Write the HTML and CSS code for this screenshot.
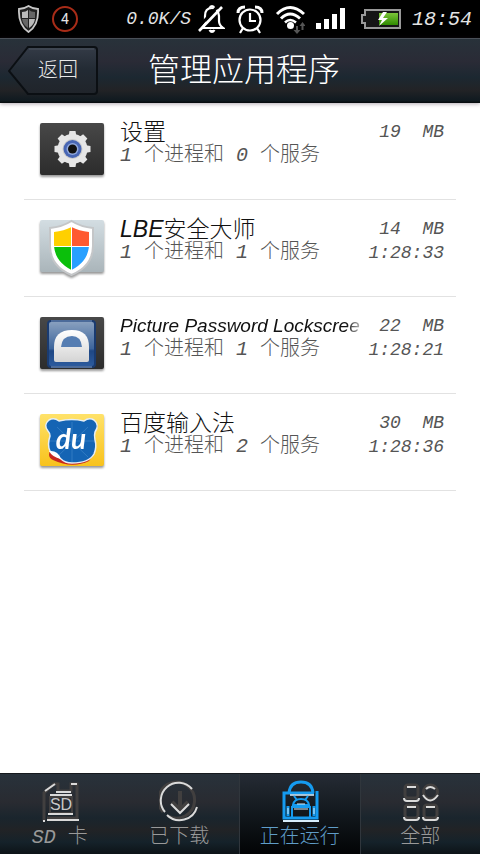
FILE: index.html
```html
<!DOCTYPE html>
<html lang="zh-CN">
<head>
    <meta charset="UTF-8">
    <meta name="viewport" content="width=device-width, initial-scale=1.0">
    <title>管理应用程序</title>
    <link rel="stylesheet" href="styles.css">
</head>
<body>

    <!-- status bar -->
    <div class="status-bar">
        <svg width="21" height="28" viewBox="0 0 21 28">
            <path d="M10.500 1Q15 4 20 4Q21 20 10.500 27Q0 20 1 4Q6 4 10.500 1Z" fill="#222" stroke="#c8c8c8" stroke-width="1.800"/>
            <path d="M10 5V13H4V7Q8 7 10 5Z" fill="#bbb"/>
            <path d="M11 5V13H17V7Q13 7 11 5Z" fill="#666"/>
            <path d="M4 14H10V23Q5 20 4 14Z" fill="#666"/>
            <path d="M17 14H11V23Q16 20 17 14Z" fill="#bbb"/>
        </svg>
        <span class="count">4</span>
        <div class="status-right">
            <span class="speed">0.0K/S</span>
            <svg width="28" height="30" viewBox="0 0 28 30" fill="none" stroke="#fff" stroke-width="2.200">
                <path d="M5 24H26Q22 21 22 17V12Q21 4 15 4Q8 4 8 12V17Q8 21 5 24Z"/>
                <path d="M12.500 4Q13 2 15 2Q17 2 17.500 4" stroke-width="1.800"/>
                <path d="M12.500 26Q15 30 17.500 26" fill="#fff"/>
                <path d="M0 25L22 1" stroke="#000" stroke-width="3"/>
                <path d="M2 27L25 3" stroke-width="2.600"/>
            </svg>
            <svg width="28" height="30" viewBox="0 0 28 30" fill="none" stroke="#fff" stroke-width="2.200">
                <circle cx="14" cy="16" r="10.500"/>
                <path d="M14 9V17H20M7 24L4 29M21 24L24 29"/>
                <path d="M2 9Q2 3 9 3M26 9Q26 3 19 3" stroke-width="3"/>
            </svg>
            <svg width="30" height="30" viewBox="0 0 30 30" fill="none" stroke="#fff" stroke-width="3">
                <path d="M2 10Q15 -3 29 10"/>
                <path d="M6 14.500Q15 5.500 25 14.500"/>
                <path d="M10 18.500Q15 13.500 21 18.500" stroke-width="2.500"/>
                <circle cx="15.500" cy="21.500" r="3.500" fill="#fff" stroke="none"/>
                <path d="M22 22V27M27.500 21V26" stroke="#555" stroke-width="2"/>
                <path d="M18.500 26H25.500L22 30ZM24.500 22H30.500L27.500 18Z" fill="#555" stroke="none"/>
            </svg>
            <svg width="30" height="30" viewBox="0 0 30 30" fill="#fff">
                <path d="M0 19H5V25H0ZM8 15H13V25H8ZM16 10H21V25H16ZM24 4H29V25H24Z"/>
            </svg>
            <svg class="battery" width="40" height="30" viewBox="0 0 40 30">
                <defs>
                    <linearGradient id="charge" x1="0" y1="0" x2="0" y2="1">
                        <stop offset="0" stop-color="#7cc53a"/>
                        <stop offset="1" stop-color="#2f8a00"/>
                    </linearGradient>
                </defs>
                <path d="M4 6H39V24H4V19H1V11H4Z" fill="#151515" stroke="#999" stroke-width="2"/>
                <rect x="18" y="9" width="19" height="12" fill="url(#charge)"/>
                <path d="M22 8L17 16H21L18 22L27 14H22L26 8Z" fill="#fff"/>
            </svg>
            <span class="clock">18:54</span>
        </div>
    </div>

    <!-- title bar -->
    <header class="header">
        <button class="back" type="button">
            <svg width="90" height="50" viewBox="0 0 90 50">
                <defs>
                    <linearGradient id="backFill" x1="0" y1="0" x2="0" y2="1">
                        <stop offset="0" stop-color="#343b47"/>
                        <stop offset="0.500" stop-color="#222a33"/>
                        <stop offset="1" stop-color="#20242a"/>
                    </linearGradient>
                </defs>
                <path d="M20 1H86Q89 1 89 4V45Q89 48 86 48H20L1 25Z" fill="url(#backFill)" stroke="#0b0f13" stroke-width="2"/>
                <path d="M21 3H86" stroke="#4b525c"/>
            </svg>
            <span>返回</span>
        </button>
        <h1>管理应用程序</h1>
    </header>

    <!-- running apps -->
    <main>
        <ul class="app-list">
            <li>
                <svg class="app-icon" width="66" height="60" viewBox="0 0 66 60">
                    <defs>
                        <linearGradient id="dark" x1="0" y1="0" x2="0" y2="1">
                            <stop offset="0" stop-color="#484848"/>
                            <stop offset="1" stop-color="#2c2c2c"/>
                        </linearGradient>
                        <linearGradient id="metal" x1="0" y1="0" x2="0" y2="1">
                            <stop offset="0" stop-color="#fff"/>
                            <stop offset="1" stop-color="#d4d4d4"/>
                        </linearGradient>
                    </defs>
                    <rect x="1" y="1" width="64" height="52" rx="2" fill="url(#dark)"/>
                    <g fill="#e6e6e6" transform="translate(33.500 27)">
                        <circle r="15"/>
                        <path id="tooth" d="M-4 -12L-3 -18H3L4 -12V12L3 18H-3L-4 12Z"/>
                        <use href="#tooth" transform="rotate(45)"/>
                        <use href="#tooth" transform="rotate(90)"/>
                        <use href="#tooth" transform="rotate(135)"/>
                        <circle r="10" fill="#ccc"/>
                        <circle r="9" fill="#4866b4"/>
                        <circle r="6" fill="#91a9dd"/>
                        <circle r="4.500" fill="#111"/>
                    </g>
                </svg>
                <div class="app-info">
                    <h2>设置</h2>
                    <p><i>1</i> 个进程和 <i>0</i> 个服务</p>
                </div>
                <div class="app-usage">
                    <p>19&nbsp; MB</p>
                </div>
            </li>
            <li>
                <svg class="app-icon" width="66" height="60" viewBox="0 0 66 60">
                    <defs>
                        <linearGradient id="silver" x1="0" y1="0" x2="0" y2="1">
                            <stop offset="0" stop-color="#d3dde2"/>
                            <stop offset="1" stop-color="#aab5ba"/>
                        </linearGradient>
                        <clipPath id="shield">
                            <path d="M32.500 8Q40 12 50 13V25Q50 42 32.500 51Q15 42 15 25V13Q25 12 32.500 8Z"/>
                        </clipPath>
                    </defs>
                    <rect x="1" y="1" width="64" height="52" rx="2" fill="url(#silver)"/>
                    <path d="M32.500 2Q42 8 54 9V27Q54 47 32.500 56Q11 47 11 27V9Q23 8 32.500 2Z" fill="#fff" stroke="#c4c6c8" stroke-width="2"/>
                    <g clip-path="url(#shield)">
                        <path d="M14 6H32V27H14Z" fill="#ffd000"/>
                        <path d="M33 6H51V27H33Z" fill="#ff5a30"/>
                        <path d="M14 28H32V52H14Z" fill="#0bbf0b"/>
                        <path d="M33 28H51V52H33Z" fill="#28a0ff"/>
                    </g>
                </svg>
                <div class="app-info">
                    <h2><i>LBE</i>安全大师</h2>
                    <p><i>1</i> 个进程和 <i>1</i> 个服务</p>
                </div>
                <div class="app-usage">
                    <p>14&nbsp; MB</p>
                    <p>1:28:33</p>
                </div>
            </li>
            <li>
                <svg class="app-icon" width="66" height="60" viewBox="0 0 66 60">
                    <defs>
                        <linearGradient id="blue" x1="0" y1="0" x2="0" y2="1">
                            <stop offset="0" stop-color="#8ba2c0"/>
                            <stop offset="0.600" stop-color="#3d659c"/>
                            <stop offset="0.650" stop-color="#1f4784"/>
                            <stop offset="1" stop-color="#2d5c9f"/>
                        </linearGradient>
                    </defs>
                    <rect x="1" y="1" width="64" height="52" rx="2" fill="url(#dark)"/>
                    <rect x="9" y="5" width="47" height="46" rx="3" fill="url(#blue)" stroke="#1a3b70" stroke-width="2"/>
                    <path d="M12 5H53M12 51H53" stroke="#7f9cc4"/>
                    <path d="M15 44V31Q15 14 33 14Q50 14 50 31V44Q50 46 48 46H17Q15 46 15 44Z" fill="url(#metal)"/>
                    <path d="M22 31Q23 20 33 20Q42 20 43 31Z" fill="#557db2"/>
                </svg>
                <div class="app-info">
                    <h2 class="fade"><i>Picture Password Lockscree</i></h2>
                    <p><i>1</i> 个进程和 <i>1</i> 个服务</p>
                </div>
                <div class="app-usage">
                    <p>22&nbsp; MB</p>
                    <p>1:28:21</p>
                </div>
            </li>
            <li>
                <svg class="app-icon" width="66" height="60" viewBox="0 0 66 60">
                    <defs>
                        <linearGradient id="yellow" x1="0" y1="0" x2="0" y2="1">
                            <stop offset="0" stop-color="#ffe26a"/>
                            <stop offset="1" stop-color="#f8c21c"/>
                        </linearGradient>
                    </defs>
                    <rect x="1" y="1" width="64" height="52" rx="2" fill="url(#yellow)"/>
                    <path d="M11 38Q8 44 14 47Q33 56 50 48L54 42Z" fill="#c8281e"/>
                    <path d="M20 8Q33 5 45 8Q50 4 55 7Q61 12 56 19Q55 22 56 27Q58 34 55 41Q50 50 33 50Q26 50 22 46L11 38Q8 32 11 23Q11 20 9 18Q4 12 10 7Q15 4 20 8Z" fill="#1464b4" stroke="#e6eef5" stroke-width="1.500"/>
                    <path d="M33 9V49M11 28H55M18 14L49 44M49 14L18 44" stroke="#3c84c8" stroke-width="0.700"/>
                    <path d="M10 38Q19 37 22 46Q13 44 10 38Z" fill="#fff"/>
                    <text class="du" x="32" y="36" text-anchor="middle">du</text>
                </svg>
                <div class="app-info">
                    <h2>百度输入法</h2>
                    <p><i>1</i> 个进程和 <i>2</i> 个服务</p>
                </div>
                <div class="app-usage">
                    <p>30&nbsp; MB</p>
                    <p>1:28:36</p>
                </div>
            </li>
        </ul>
    </main>

    <!-- bottom tabs -->
    <nav class="tabs">
        <a href="#sd">
            <svg width="40" height="42" viewBox="0 0 40 42" fill="none" stroke="#413f3f" stroke-width="3">
                <path d="M4 41V13L14 4H18V11H31V4H37V38H7"/>
                <path d="M10 17H32V33H10Z" stroke-width="2"/>
                <path d="M5 11L15 4M16 12H31M31 4H37M10 15H32M8 34H33M7 40H39M3 41H5" stroke="#dadada" stroke-width="2"/>
                <text class="sd-mark" x="21" y="30" text-anchor="middle">SD</text>
            </svg>
            <span><i>SD</i> 卡</span>
        </a>
        <a href="#downloaded">
            <svg width="40" height="42" viewBox="0 0 40 42" fill="none" stroke="#413f3f" stroke-width="3">
                <path d="M4 32A18 18 0 1 1 9 36"/>
                <path d="M21 11V30M13 22L21 30L29 22" stroke-width="4"/>
                <path d="M6 32A17 17 0 0 1 33 9M8 35A18 18 0 0 0 38 27M12 24L21 33L30 24" stroke="#dadada" stroke-width="2"/>
            </svg>
            <span>已下载</span>
        </a>
        <a href="#running" class="active">
            <svg width="40" height="42" viewBox="0 0 40 42" fill="none" stroke="#159bf0" stroke-width="3">
                <path d="M3 41H39" stroke="#d8eefc" stroke-width="2"/>
                <path d="M9 13Q10 2 21 2Q32 2 33 13"/>
                <path d="M37 11V38H4V13H34"/>
                <path d="M10 15H34" stroke="#d8eefc" stroke-width="1.500"/>
                <path d="M13 25Q14 19 21 19Q28 19 29 25ZM12 38V27H30V38M14 16L17 20M28 16L25 20" stroke-width="2"/>
                <path d="M8 26V36M34 26V36" stroke-width="3"/>
                <path d="M17 24H25M14 29H28M8 28V34M34 28V34" stroke="#d8eefc" stroke-width="1"/>
            </svg>
            <span>正在运行</span>
        </a>
        <a href="#all">
            <svg width="40" height="42" viewBox="0 0 40 42" fill="none" stroke="#413f3f" stroke-width="3">
                <rect x="5" y="5" width="13" height="13" rx="3"/>
                <circle cx="30.500" cy="12" r="7"/>
                <rect x="5" y="25" width="13" height="13" rx="3"/>
                <rect x="24" y="25" width="13" height="13" rx="3"/>
                <path d="M7 7H16M4 18Q4 21 7 21H16Q19 21 19 18M26 9Q30 5 35 9M23 15Q30 26 38 15M7 27H16M4 37Q4 40 7 40H16Q19 40 19 37M26 27H35M23 37Q23 40 26 40H35Q38 40 38 37" stroke="#dadada" stroke-width="2"/>
            </svg>
            <span>全部</span>
        </a>
    </nav>

</body>
</html>
```
FILE: styles.css
```css
* {
    box-sizing: border-box;
}

body {
    font-family: 'Liberation Mono', 'Noto Sans CJK SC', monospace;
    font-weight: 300;
    background-color: #fff;
    color: #555;
    margin: 0;
    min-height: 100vh;
    display: flex;
    flex-direction: column;
}

h1, h2, p, ul {
    margin: 0;
    padding: 0;
    font-weight: 300;
}

svg {
    display: block;
    flex: none;
}

.status-bar {
    display: flex;
    align-items: center;
    height: 38px;
    padding: 0 8px 0 18px;
    background-color: #000;
    color: #e4e4e4;
}

.count {
    width: 26px;
    height: 26px;
    margin-left: 13px;
    border: 2px solid #a82c18;
    border-radius: 50%;
    font-family: 'Roboto', sans-serif;
    font-size: 14px;
    font-weight: 400;
    line-height: 22px;
    text-align: center;
}

.status-right {
    display: flex;
    align-items: center;
    gap: 11px;
    margin-left: auto;
    font-style: italic;
}

.speed {
    margin-right: -5px;
    font-size: 18px;
}

.battery {
    margin-left: 4px;
}

.clock {
    font-size: 20px;
}

.header {
    display: grid;
    grid-template-columns: 1fr auto 1fr;
    align-items: center;
    height: 65px;
    padding-left: 8px;
    border-top: 1px solid #4a5058;
    background: linear-gradient(#28323a, #2a2b36 35%, #1c2831 60%, #222326 80%, #101a20 96%, #050a0c);
    box-shadow: 0 1px 4px rgba(60, 40, 60, 0.4);
}

.header h1 {
    padding-top: 4px;
    color: #fff;
    font-size: 32px;
    line-height: 40px;
}

.back {
    position: relative;
    width: 90px;
    height: 50px;
    padding: 0 0 6px 10px;
    border: none;
    background: none;
    color: #e8e8e8;
    font: inherit;
    font-size: 20px;
    cursor: pointer;
}

.back svg {
    position: absolute;
    top: 0;
    left: 0;
}

.back span {
    position: relative;
}

main {
    flex: 1;
    padding: 0 24px;
}

.app-list {
    list-style: none;
}

.app-list li {
    display: grid;
    grid-template-columns: 66px 1fr auto;
    height: 97px;
    padding: 16px 12px 0 15px;
    border-bottom: 1px solid #e2e2e2;
}

.app-icon {
    margin-top: 3px;
    filter: drop-shadow(0 2px 1px rgba(0, 0, 0, 0.4));
}

.app-info {
    min-width: 0;
    margin-left: 15px;
}

.app-info h2 {
    color: #111;
    font-family: 'Liberation Sans', 'Noto Sans CJK SC', sans-serif;
    font-size: 23px;
    line-height: 26px;
    white-space: nowrap;
}

.app-info .fade {
    overflow: hidden;
    font-size: 19px;
    -webkit-mask-image: linear-gradient(to right, #000 92%, transparent);
    mask-image: linear-gradient(to right, #000 92%, transparent);
}

.app-info p {
    font-size: 20px;
    line-height: 22px;
    white-space: nowrap;
}

.app-usage {
    min-width: 78px;
    font-size: 18px;
    font-style: italic;
    line-height: 22px;
    text-align: right;
}

.app-usage p:first-child {
    line-height: 26px;
}

.du {
    fill: #fff;
    font: italic bold 28px 'Lato', sans-serif;
}

.tabs {
    display: flex;
    height: 81px;
    border-top: 1px solid #15191d;
    background: linear-gradient(#28323b, #292b31 35%, #1a252d 55%, #212326 70%, #15222a 85%, #0d1317);
}

.tabs a {
    flex: 1;
    display: flex;
    flex-direction: column;
    align-items: center;
    gap: 4px;
    padding-top: 6px;
    color: #999;
    font-size: 20px;
    line-height: 24px;
    text-decoration: none;
}

.tabs .active {
    border-left: 1px solid #30363c;
    border-right: 1px solid #30363c;
    background: linear-gradient(#252b34, #12181d 50%, #020405);
    color: #5f9dc8;
}

.sd-mark {
    fill: #c8c8c8;
    stroke: none;
    font: 16px 'Liberation Sans', sans-serif;
}
```
